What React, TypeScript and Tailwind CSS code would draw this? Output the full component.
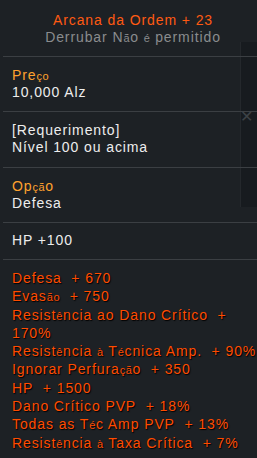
import React from 'react';

// accented glyphs render smaller in the game font
function A({ children }: { children: React.ReactNode }) {
  return <span className="text-[11px] leading-none tracking-[0.6px]">{children}</span>;
}

function Sep() {
  return <div className="ml-[3px] h-px bg-[#3b3f43]" />;
}

const options: React.ReactNode[] = [
  <>Defesa&nbsp; + 670</>,
  <>Evas<A>ão</A>&nbsp; + 750</>,
  <>Resist<A>ê</A>ncia ao Dano Crítico&nbsp; +</>,
  <>170%</>,
  <>Resist<A>ê</A>ncia <A>à</A> T<A>é</A>cnica Amp.&nbsp; + 90%</>,
  <>Ignorar Perfura<A>çã</A>o&nbsp; + 350</>,
  <>HP&nbsp; + 1500</>,
  <>Dano Crítico PVP&nbsp; + 18%</>,
  <>Todas as T<A>é</A>c Amp PVP&nbsp; + 13%</>,
  <>Resist<A>ê</A>ncia <A>à</A> Taxa Crítica&nbsp; + 7%</>,
];

export default function App() {
  return (
    <div
      className="relative w-[257px] h-[458px] overflow-hidden bg-[#1d2125] text-[14px] tracking-[0.9px] text-[#ededed]"
      style={{ fontFamily: '"Liberation Sans", Arial, sans-serif' }}
    >
      {/* faint window behind the tooltip */}
      <div className="absolute right-0 top-[42px] w-[17px] h-[165px] bg-[#171b1f] border-l border-[#24282c]" />
      <div className="absolute right-[3px] top-[109px] text-[16px] leading-none text-[#3d4246]">✕</div>

      <div className="relative">
        {/* header */}
        <div className="pt-[12px] pb-[10px] pl-3 pr-[3px] text-center leading-[17px]">
          <div className="text-[#ff5a12]">Arcana da Ordem + 23</div>
          <div className="text-[#8a8c8e]">
            Derrubar N<A>ã</A>o <A>é</A> permitido
          </div>
        </div>
        <Sep />

        <div className="pt-[10px] pb-[10px] pl-3 leading-[17px]">
          <div className="text-[#ffa22e]">
            Pre<A>ço</A>
          </div>
          <div>10,000 Alz</div>
        </div>
        <Sep />

        <div className="pt-[10px] pb-[11px] pl-3 leading-[17px]">
          <div>[Requerimento]</div>
          <div>Nível 100 ou acima</div>
        </div>
        <Sep />

        <div className="pt-[10px] pb-[10px] pl-3 leading-[17px]">
          <div className="text-[#ffa22e]">
            Op<A>çã</A>o
          </div>
          <div>Defesa</div>
        </div>
        <Sep />

        <div className="pt-[9px] pb-[10px] pl-3 leading-[17px]">
          <div>HP +100</div>
        </div>
        <Sep />

        <div className="pt-[9px] pl-3 leading-[18.3px] text-[#ff4c00] [text-shadow:1px_1px_1px_#000]">
          {options.map((o, i) => (
            <div key={i} className="whitespace-nowrap">
              {o}
            </div>
          ))}
        </div>
      </div>
    </div>
  );
}
